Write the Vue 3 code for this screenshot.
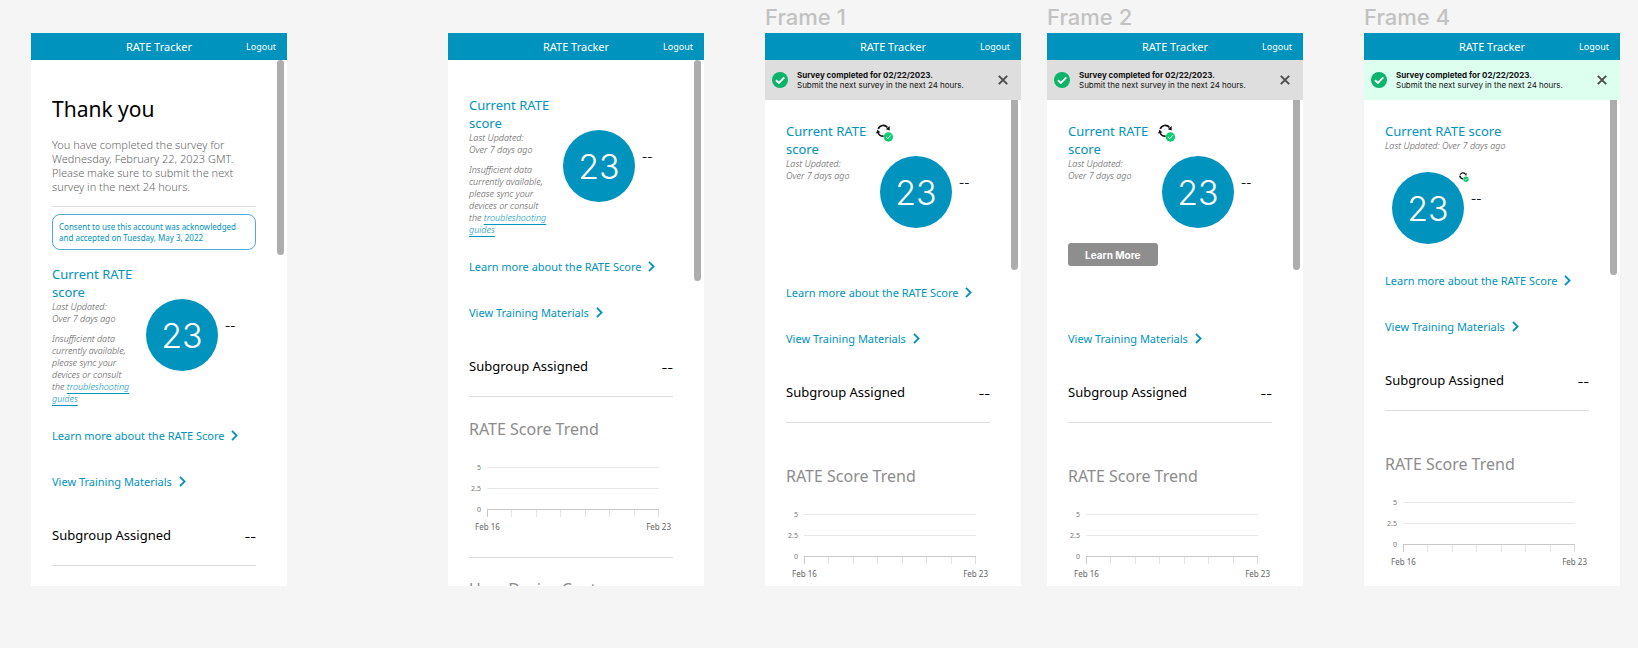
<script setup>
const screens = [
  {
    id: 'thanks',
    thankYou: true,
    details: true,
    learn: 'link',
    thumb: 37
  },
  {
    id: 'home',
    details: true,
    learn: 'link',
    chart: true,
    nextSection: true,
    thumb: 42
  },
  {
    id: 'frame-1',
    label: 'Frame 1',
    banner: 'neutral',
    sync: 'title',
    learn: 'link',
    chart: true,
    thumb: 35
  },
  {
    id: 'frame-2',
    label: 'Frame 2',
    banner: 'neutral',
    sync: 'title',
    learn: 'button',
    chart: true,
    thumb: 35
  },
  {
    id: 'frame-4',
    label: 'Frame 4',
    banner: 'success',
    sync: 'score',
    wide: true,
    learn: 'link',
    chart: true,
    thumb: 36
  }
]

const levels = ['5', '2.5', '0']
</script>

<template>
  <main class="canvas">
    <section v-for="screen in screens" :key="screen.id" class="frame" :class="screen.id">
      <div class="frame-label">{{ screen.label }}</div>
      <div class="phone">
        <header class="topbar">
          <span class="topbar-title">RATE Tracker</span>
          <a class="logout" href="#">Logout</a>
        </header>

        <div v-if="screen.banner" class="banner" :class="screen.banner">
          <svg class="banner-icon" viewBox="0 0 16 16" aria-hidden="true">
            <circle cx="8" cy="8" r="8" fill="#0bb36b" />
            <path d="M4 8.2 6.9 11 12.3 5.4" fill="none" stroke="#fff" stroke-width="1.9" />
          </svg>
          <p class="banner-text">
            <strong>Survey completed for 02/22/2023.</strong>
            <span>Submit the next survey in the next 24 hours.</span>
          </p>
          <button class="close" type="button" aria-label="Close">
            <svg viewBox="0 0 10 10" aria-hidden="true">
              <path d="M.8.8 9.2 9.2M9.2.8.8 9.2" fill="none" stroke="#4a4a4a" stroke-width="1.9" />
            </svg>
          </button>
        </div>

        <div class="body" :class="{ 'under-banner': screen.banner }">
          <template v-if="screen.thankYou">
            <h1 class="thanks-title">Thank you</h1>
            <p class="thanks-text">
              You have completed the survey for Wednesday, February 22, 2023 GMT. Please make sure to
              submit the next survey in the next 24 hours.
            </p>
            <p class="consent">
              Consent to use this account was acknowledged and accepted on Tuesday, May 3, 2022
            </p>
          </template>

          <div class="score" :class="{ wide: screen.wide, short: screen.learn === 'button' }">
            <div class="score-info">
              <h2 class="score-title">Current RATE score</h2>
              <p class="updated"><span>Last Updated: </span><span>Over 7 days ago</span></p>
              <p v-if="screen.details" class="details">
                Insufficient data currently available, please sync your devices or consult the
                <a href="#">troubleshooting guides</a>
              </p>
            </div>
            <div class="score-side">
              <div class="sync-slot">
                <svg v-if="screen.sync === 'title'" class="sync" viewBox="0 0 18 18" aria-hidden="true">
                  <g fill="none" stroke="#111" stroke-width="1.7">
                    <path d="M2.2 4.9A5.3 5.3 0 0 1 11.4 3.6" />
                    <path d="M1.8 7.6A5.5 5.5 0 0 0 7.6 12.2" />
                  </g>
                  <path d="M13.7 2V6.4L9.8 5.2Z" fill="#111" />
                  <path d="M0 9.4 1.4 5.8 4.4 8.3Z" fill="#111" />
                  <circle cx="12.4" cy="13" r="4.7" fill="#0dcc72" />
                  <path d="M10.2 13.1 11.8 14.7 14.8 11.3" fill="none" stroke="#fff" />
                </svg>
              </div>
              <div class="score-row">
                <div class="circle">
                  23
                  <svg v-if="screen.sync === 'score'" class="sync-badge" viewBox="0 0 18 18" aria-hidden="true">
                    <g fill="none" stroke="#111" stroke-width="2.2">
                      <path d="M2.2 4.9A5.3 5.3 0 0 1 11.4 3.6" />
                      <path d="M1.8 7.6A5.5 5.5 0 0 0 7.6 12.2" />
                    </g>
                    <path d="M13.7 2V6.4L9.8 5.2Z" fill="#111" />
                    <path d="M0 9.4 1.4 5.8 4.4 8.3Z" fill="#111" />
                    <circle cx="12.6" cy="13" r="4.8" fill="#0dcc72" />
                    <path d="M10.4 13.1 12 14.7 15 11.3" fill="none" stroke="#fff" />
                  </svg>
                </div>
                <span class="delta">--</span>
              </div>
            </div>
          </div>

          <a v-if="screen.learn === 'link'" class="nav-link" href="#">
            Learn more about the RATE Score
            <svg viewBox="0 0 7 11" aria-hidden="true">
              <path d="M1 .8 5.6 5.5 1 10.2" fill="none" stroke="#0093be" stroke-width="1.8" />
            </svg>
          </a>
          <button v-else class="learn-button" type="button">Learn More</button>

          <a class="nav-link" href="#">
            View Training Materials
            <svg viewBox="0 0 7 11" aria-hidden="true">
              <path d="M1 .8 5.6 5.5 1 10.2" fill="none" stroke="#0093be" stroke-width="1.8" />
            </svg>
          </a>

          <div class="subgroup">
            <span>Subgroup Assigned</span>
            <span class="subgroup-value">--</span>
          </div>

          <div v-if="screen.chart" class="trend">
            <h2 class="section-title">RATE Score Trend</h2>
            <div class="chart">
              <div v-for="level in levels" :key="level" class="level">
                <span class="level-label">{{ level }}</span>
                <span class="level-line"></span>
              </div>
              <div class="ticks">
                <i v-for="n in 7" :key="n"></i>
              </div>
              <div class="dates">
                <span>Feb 16</span>
                <span>Feb 23</span>
              </div>
            </div>
          </div>

          <div v-if="screen.nextSection" class="next-section">
            <h2 class="section-title">User Device Capture</h2>
          </div>

          <div class="thumb" :style="{ height: screen.thumb + '%' }"></div>
        </div>
      </div>
    </section>
  </main>
</template>

<style>
body {
  margin: 0;
  background: #f5f5f5;
}
</style>

<style scoped>
.canvas {
  box-sizing: border-box;
  display: grid;
  grid-template-columns: 31fr 256fr 161fr 256fr 61fr 256fr 26fr 256fr 61fr 256fr 18fr;
  grid-template-rows: minmax(0, 1fr);
  height: 100vh;
  padding-bottom: 62px;
  background: #f5f5f5;
  font-family: "Noto Sans", sans-serif;
}

h1,
h2,
p {
  margin: 0;
  font-weight: 400;
}

a {
  color: #0093be;
  text-decoration: none;
}

button {
  border: none;
  cursor: pointer;
}

.frame {
  display: flex;
  flex-direction: column;
  min-width: 0;
}

.thanks {
  grid-column: 2;
}

.home {
  grid-column: 4;
}

.frame-1 {
  grid-column: 6;
}

.frame-2 {
  grid-column: 8;
}

.frame-4 {
  grid-column: 10;
}

.frame-label {
  flex: none;
  height: 33px;
  font-family: Inter, sans-serif;
  font-size: 22px;
  font-weight: 500;
  line-height: 34px;
  color: #c2c2c2;
}

.phone {
  display: flex;
  flex: 1;
  flex-direction: column;
  min-height: 0;
  overflow: hidden;
  background: #fff;
}

.topbar {
  display: grid;
  flex: none;
  grid-template-columns: 1fr auto 1fr;
  align-items: center;
  height: 27px;
  padding: 0 11px;
  background: #0093be;
  color: #fff;
}

.topbar-title {
  grid-column: 2;
  font-size: 11px;
}

.logout {
  justify-self: end;
  font-size: 9px;
  color: #fff;
}

.banner {
  display: flex;
  flex: none;
  align-items: center;
  gap: 9px;
  height: 40px;
  padding: 0 13px 0 7px;
  font-family: Inter, sans-serif;
}

.neutral {
  background: #dedede;
}

.success {
  background: #dcfff0;
}

.banner-icon {
  flex: none;
  width: 16px;
  height: 16px;
}

.banner-text {
  display: flex;
  flex: 1;
  flex-direction: column;
  font-size: 8px;
  line-height: 10px;
  white-space: nowrap;
  color: #111;
}

.close {
  display: flex;
  padding: 0;
  background: none;
}

.close svg {
  width: 10px;
  height: 10px;
}

.body {
  position: relative;
  display: flex;
  flex: 1;
  flex-direction: column;
  min-height: 0;
  padding: 36px 31px 0 21px;
}

.body > * {
  flex: none;
}

.under-banner {
  padding-top: 22px;
}

.thanks-title {
  font-size: 21px;
  line-height: 26px;
  color: #000;
}

.thanks-text {
  margin-top: 16px;
  padding-bottom: 12px;
  border-bottom: 1px solid #dcdcdc;
  font-size: 11px;
  font-weight: 300;
  line-height: 14px;
  color: #666;
}

.consent {
  margin: 7px 0 15px;
  padding: 6px;
  border: 1px solid #4fabd0;
  border-radius: 8px;
  font-size: 8px;
  line-height: 11px;
  color: #0093be;
}

.score {
  display: flex;
  gap: 7px;
  min-height: 161px;
}

.score-info {
  width: 83px;
}

.score-title {
  font-size: 13px;
  line-height: 18px;
  color: #0093be;
}

.updated,
.details {
  font-size: 9px;
  font-style: italic;
  font-weight: 300;
  line-height: 12px;
  color: #555;
}

.updated span {
  display: block;
}

.details {
  margin-top: 8px;
}

.details a {
  text-decoration: underline;
  text-underline-offset: 3px;
}

.sync-slot {
  height: 34px;
}

.sync {
  width: 18px;
  height: 18px;
  margin-top: 2px;
}

.score-row {
  display: flex;
  gap: 7px;
  margin-left: 4px;
}

.circle {
  position: relative;
  width: 72px;
  height: 72px;
  border-radius: 50%;
  background: #0093be;
  font-family: Inter, sans-serif;
  font-size: 34px;
  font-weight: 300;
  line-height: 73px;
  text-align: center;
  color: #fff;
}

.sync-badge {
  position: absolute;
  top: 0;
  right: -5px;
  width: 10px;
  height: 10px;
}

.delta {
  margin-top: 18px;
  font-size: 16px;
  font-weight: 300;
  line-height: 16px;
  color: #000;
}

.short {
  min-height: 121px;
}

.wide {
  flex-direction: column;
  gap: 0;
  min-height: 149px;
}

.wide .score-info {
  width: auto;
}

.wide .updated span {
  display: inline;
}

.wide .sync-slot {
  height: 20px;
}

.wide .score-row {
  margin-left: 7px;
}

.nav-link {
  display: flex;
  align-items: center;
  gap: 7px;
  height: 18px;
  font-size: 11px;
  white-space: nowrap;
}

.nav-link + .nav-link {
  margin-top: 28px;
}

.nav-link svg {
  width: 7px;
  height: 11px;
}

.learn-button {
  align-self: flex-start;
  height: 23px;
  margin-bottom: 63px;
  padding: 0 17px;
  border-radius: 3px;
  background: #8e8e8e;
  font-family: Inter, sans-serif;
  font-size: 10px;
  font-weight: 700;
  color: #fff;
}

.subgroup {
  display: flex;
  justify-content: space-between;
  margin-top: 35px;
  padding-bottom: 20px;
  border-bottom: 1px solid #dcdcdc;
  font-size: 13px;
  line-height: 20px;
  color: #000;
}

.subgroup-value {
  font-size: 18px;
  font-weight: 300;
}

.trend {
  padding-top: 22px;
}

.under-banner .trend {
  padding-top: 43px;
}

.section-title {
  font-size: 16px;
  line-height: 20px;
  color: #8c8c8c;
}

.chart {
  padding: 18px 14px 0 0;
}

.level {
  display: flex;
  align-items: center;
  gap: 6px;
  height: 21px;
}

.level-label {
  width: 12px;
  font-size: 7px;
  text-align: right;
  color: #777;
}

.level-line {
  flex: 1;
  height: 1px;
  background: #e8e8e8;
}

.level:nth-child(3) .level-line {
  background: #c8c8c8;
}

.ticks {
  display: flex;
  height: 7px;
  margin: -10px 0 0 18px;
  border-right: 1px solid #ddd;
}

.ticks i {
  flex: 1;
  border-left: 1px solid #e4e4e4;
}

.ticks i:first-child {
  border-left-color: #c8c8c8;
}

.dates {
  display: flex;
  justify-content: space-between;
  margin: 4px -12px 0 6px;
  font-size: 8px;
  line-height: 12px;
  color: #666;
}

.next-section {
  margin-top: 24px;
  padding-top: 21px;
  border-top: 1px solid #dcdcdc;
}

/* scroll position indicator over the right edge */
.thumb {
  position: absolute;
  top: 0;
  right: 3px;
  width: 7px;
  border-radius: 4px;
  background: #adadad;
}

.under-banner .thumb {
  border-radius: 0 0 4px 4px;
}
</style>
